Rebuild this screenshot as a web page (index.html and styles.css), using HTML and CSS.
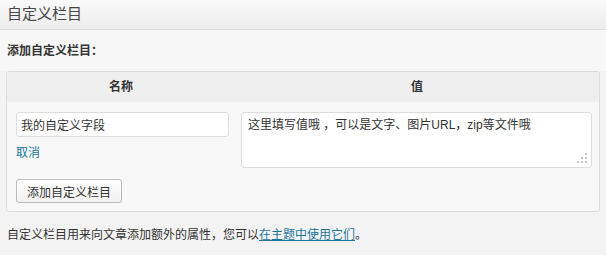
FILE: index.html
```html
<!DOCTYPE html>
<html>
<head>
    <meta charset="utf-8">
    <title>自定义栏目</title>
    <link rel="stylesheet" href="styles.css">
</head>
<body>
    <div class="postbox">
        <h3 class="hndle">自定义栏目</h3>

        <div class="inside">
            <p class="label">添加自定义栏目：</p>

            <!-- new meta row -->
            <div class="meta">
                <div class="meta-head">
                    <div>名称</div>
                    <div>值</div>
                </div>
                <div class="meta-body">
                    <div class="col-key">
                        <input type="text" class="key" value="我的自定义字段">
                        <a href="#" class="cancel">取消</a>
                    </div>
                    <div class="col-value">
                        <div class="ta-wrap">
                            <textarea class="value">这里填写值哦 ，可以是文字、图片URL，zip等文件哦</textarea>
                            <svg class="grip" width="11" height="11" viewBox="0 0 11 11">
                                <rect x="8" y="0" width="2" height="2"/>
                                <rect x="4" y="4" width="2" height="2"/>
                                <rect x="8" y="4" width="2" height="2"/>
                                <rect x="0" y="8" width="2" height="2"/>
                                <rect x="4" y="8" width="2" height="2"/>
                                <rect x="8" y="8" width="2" height="2"/>
                            </svg>
                        </div>
                    </div>
                </div>
                <div class="submit">
                    <button type="button">添加自定义栏目</button>
                </div>
            </div>

            <p class="note">自定义栏目用来向文章添加额外的属性，您可以<a href="#">在主题中使用它们</a>。</p>
        </div>
    </div>
</body>
</html>
```

FILE: styles.css
```css
* { margin: 0; padding: 0; box-sizing: border-box; }
body { font: 12px/16px "Liberation Sans", "Noto Sans CJK SC", sans-serif; color: #333; background: #f3f3f3; }
a { color: #21759b; text-decoration: none; }

.hndle { height: 30px; padding: 4px 7px 0; font-size: 15px; line-height: 20px; font-weight: normal; color: #464646;
    background: linear-gradient(#fafafa, #ececec); border-bottom: 1px solid #dfdfdf; }

.inside { padding: 0 6px 0 6px; }
.label { font-weight: bold; padding-top: 13px; height: 41px; background: #f7f7f7; margin: 0 -6px; padding-left: 7px; }

.meta { border: 1px solid #dcdcdc; border-radius: 3px; background: #f8f8f8; }
.meta-head { display: grid; grid-template-columns: 228px 1fr; background: #efefef; height: 30px; font-weight: bold; border-radius: 3px 3px 0 0; }
.meta-head div { text-align: center; line-height: 30px; }

.meta-body { display: grid; grid-template-columns: 225px 1fr; padding: 10px 7px 0 9px; }
.key { display: block; width: 213px; height: 25px; padding: 0 4px; border: 1px solid #dddddd; border-radius: 3px; background: #fff;
    font: 12px "Liberation Sans", "Noto Sans CJK SC", sans-serif; color: #333; }
.cancel { display: inline-block; margin-top: 8px; }

.ta-wrap { position: relative; }
.value { display: block; width: 100%; height: 56px; padding: 4px 6px; border: 1px solid #dddddd; border-radius: 3px; background: #fff;
    font: 12px/16px "Liberation Sans", "Noto Sans CJK SC", sans-serif; color: #333; resize: none; }
.grip { position: absolute; right: 4px; bottom: 4px; fill: #c4c4c4; }

.submit { padding: 11px 9px 8px; }
.submit button { height: 24px; padding: 0 10px; border: 1px solid #bbbbbb; border-radius: 3px; background: linear-gradient(#fefefe, #f1f1f1);
    font: 12px "Liberation Sans", "Noto Sans CJK SC", sans-serif; color: #333; }

.note { margin-top: 15px; padding-left: 1px; }
.note a { text-decoration: underline; }
```
